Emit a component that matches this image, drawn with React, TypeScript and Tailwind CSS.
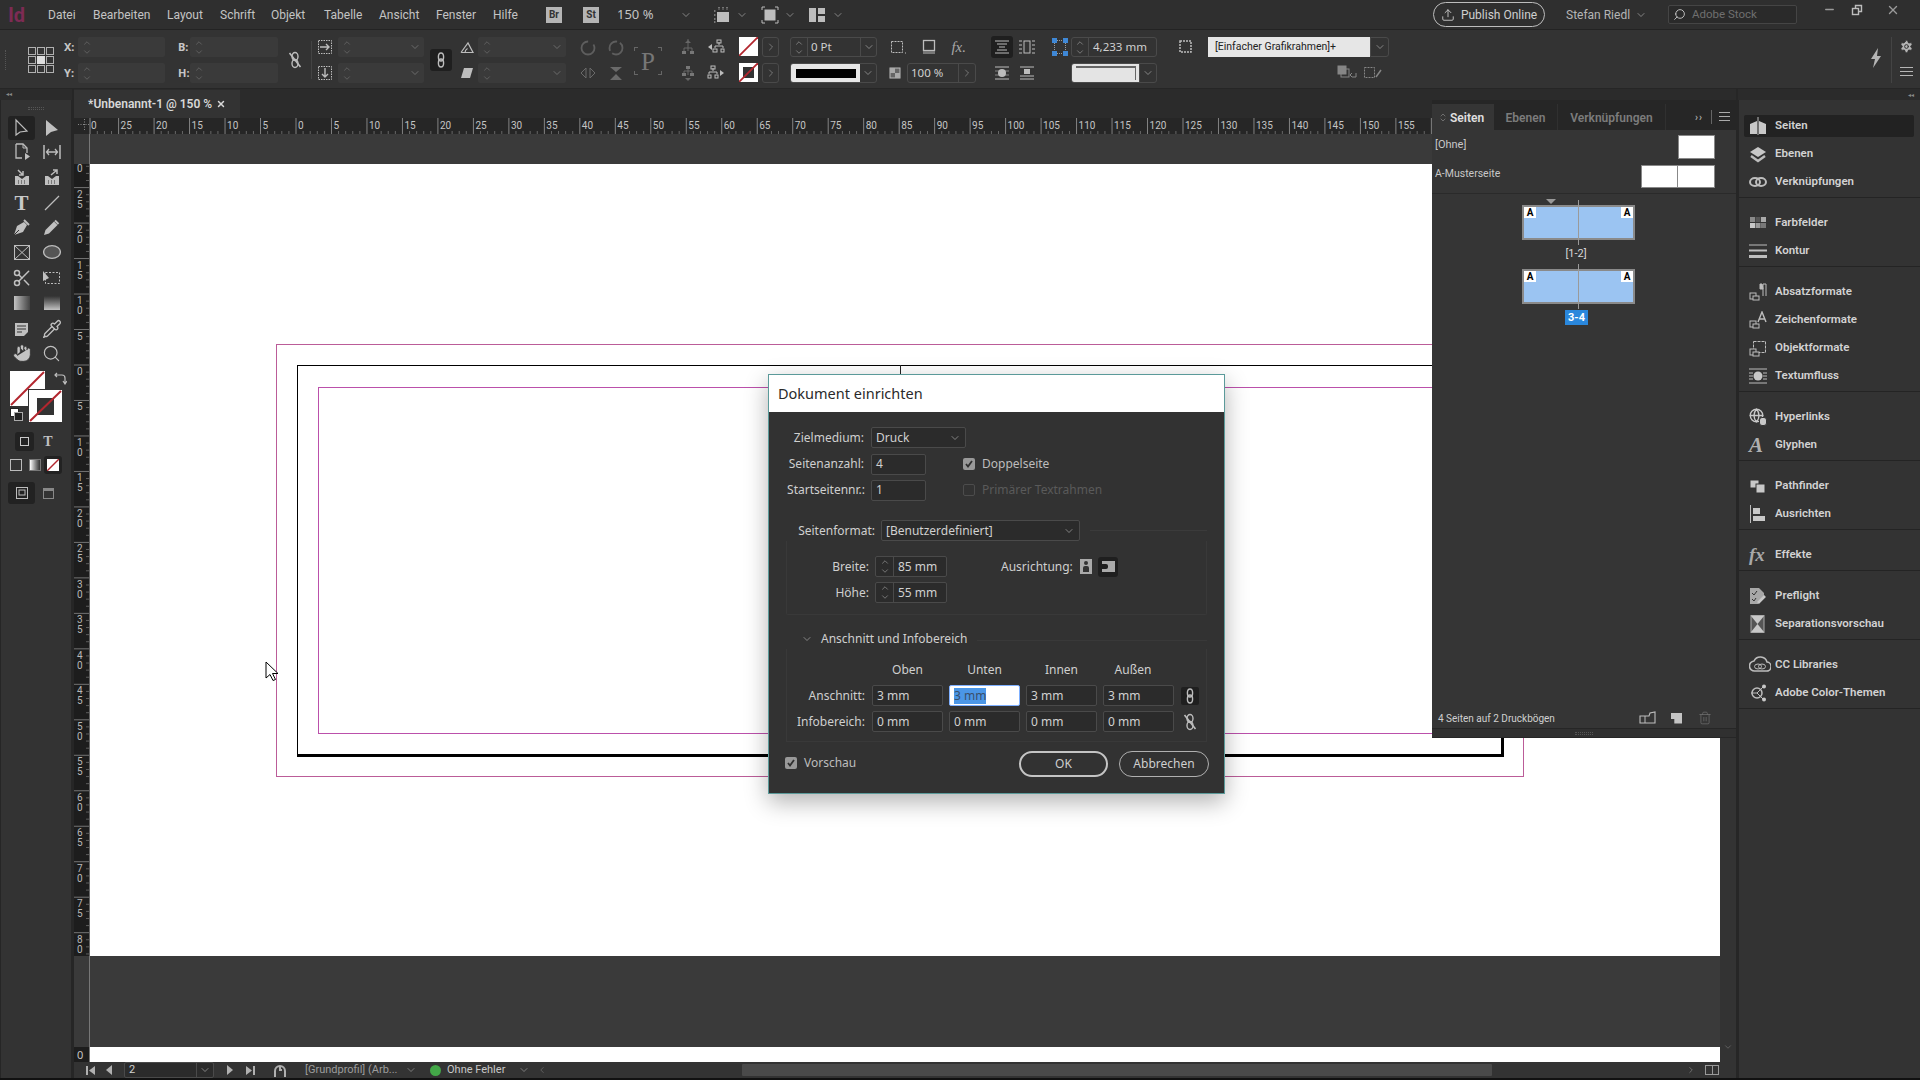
import React from 'react';
import { ChevronDown, ChevronUp, ChevronRight, Hand, Scissors, Search, Settings, Pipette, Globe, X, Minus, Upload, Trash2 } from 'lucide-react';

const ink = '#bdbdbd';

function Ico({ w = 18, h = 18, children }: { w?: number; h?: number; children: React.ReactNode }) {
  return (
    <svg width={w} height={h} viewBox={`0 0 ${w} ${h}`} fill="none" stroke={ink} strokeWidth="1" className="shrink-0 block">
      {children}
    </svg>
  );
}

function Chev({ c = 'text-[#a8a8a8]' }: { c?: string }) {
  return <ChevronDown size={12} strokeWidth={1.4} className={`${c} shrink-0`} />;
}

function Spin({ bright }: { bright?: boolean }) {
  return (
    <div className={`flex flex-col items-center -space-y-[1px] shrink-0 ${bright ? 'text-[#b4b4b4]' : 'text-[#7c7c7c]'}`}>
      <ChevronUp size={10} strokeWidth={1.3} />
      <ChevronDown size={10} strokeWidth={1.3} />
    </div>
  );
}

const chain = (
  <Ico w={10} h={16}>
    <ellipse cx="5" cy="5" rx="2.6" ry="4" strokeWidth="1.4" />
    <ellipse cx="5" cy="11" rx="2.6" ry="4" strokeWidth="1.4" />
  </Ico>
);

const brokenChain = (
  <Ico w={14} h={18}>
    <ellipse cx="7" cy="5.5" rx="3" ry="4" strokeWidth="1.4" />
    <ellipse cx="7" cy="12.5" rx="3" ry="4" strokeWidth="1.4" />
    <path d="M1.5 2 L12.5 16" strokeWidth="1.6" />
  </Ico>
);

const menuItems = [
  { label: 'Datei', cls: 'w-[45px]' },
  { label: 'Bearbeiten', cls: 'w-[74px]' },
  { label: 'Layout', cls: 'w-[53px]' },
  { label: 'Schrift', cls: 'w-[51px]' },
  { label: 'Objekt', cls: 'w-[53px]' },
  { label: 'Tabelle', cls: 'w-[55px]' },
  { label: 'Ansicht', cls: 'w-[57px]' },
  { label: 'Fenster', cls: 'w-[57px]' },
  { label: 'Hilfe', cls: 'w-[53px]' },
];

function MenuBar() {
  return (
    <div className="h-[30px] shrink-0 flex items-center bg-[#2f2f2f] border-b border-[#232323] text-[12px] text-[#c4c4c4] font-['Roboto',sans-serif]">
      <div className="w-[48px] pl-[8px] font-bold text-[20px] leading-none text-[#7d2b54]">Id</div>
      {menuItems.map(m => (
        <div key={m.label} className={m.cls}>{m.label}</div>
      ))}
      <div className="w-[16px] h-[16px] bg-[#b5b5b5] text-[#333] text-[10px] font-bold flex items-center justify-center">Br</div>
      <div className="w-[16px] h-[16px] ml-[21px] bg-[#b5b5b5] text-[#333] text-[10px] font-bold flex items-center justify-center">St</div>
      <div className="ml-[18px] w-[63px] text-[13px] font-['Noto_Sans',sans-serif]">150 %</div>
      <Chev />
      <div className="ml-[21px]">
        <Ico>
          <rect x="4" y="6" width="12" height="10" fill={ink} stroke="none" />
          <path d="M1 5h2M1 9h2M1 13h2M1 16h2M6 1v3M10 1v3M14 1v3" strokeDasharray="1.5 1" />
        </Ico>
      </div>
      <div className="ml-[5px]"><Chev /></div>
      <div className="ml-[13px]">
        <Ico>
          <rect x="3.5" y="3.5" width="11" height="11" fill={ink} stroke="none" />
          <path d="M1 4V1h3M14 1h3v3M17 14v3h-3M4 17H1v-3" />
        </Ico>
      </div>
      <div className="ml-[5px]"><Chev /></div>
      <div className="ml-[12px]">
        <Ico>
          <rect x="1" y="2" width="7" height="14" fill={ink} stroke="none" />
          <rect x="10" y="2" width="7" height="6" fill={ink} stroke="none" />
          <rect x="10" y="10" width="7" height="6" fill={ink} stroke="none" />
        </Ico>
      </div>
      <div className="ml-[6px]"><Chev /></div>
      <div className="ml-auto flex items-center pr-[5px]">
        <div className="w-[112px] h-[25px] border border-[#bdbdbd] rounded-full flex items-center justify-center gap-[6px] text-[12px] text-[#cfcfcf]">
          <Upload size={14} strokeWidth={1.5} />
          Publish Online
        </div>
        <div className="ml-[21px] w-[69px] whitespace-nowrap text-[#b5b5b5]">Stefan Riedl</div>
        <Chev />
        <div className="ml-[21px] w-[129px] h-[19px] border border-[#454545] rounded-[2px] bg-[#2a2a2a] flex items-center pl-[4px] gap-[6px] text-[11.5px] text-[#6f6f6f]">
          <Search size={13} strokeWidth={1.8} className="text-[#c0c0c0] -scale-x-100" />
          Adobe Stock
        </div>
        <div className="ml-[18px] w-[100px] h-[20px] -mt-[10px] flex items-center text-[#9a9a9a]">
          <div className="w-[28px] flex justify-center"><Minus size={13} strokeWidth={2.4} /></div>
          <div className="w-[28px] flex justify-center">
            <Ico w={12} h={12}>
              <rect x="1.5" y="4.5" width="6" height="6" strokeWidth="1.4" />
              <path d="M4.5 4V1.5h6v6H8" strokeWidth="1.4" />
            </Ico>
          </div>
          <div className="w-[44px] flex justify-center"><X size={14} strokeWidth={2.4} /></div>
        </div>
      </div>
    </div>
  );
}

function CtlField({ w, children }: { w: string; children?: React.ReactNode }) {
  return <div className={`${w} h-[20px] bg-[#3a3a3a] rounded-[2px] flex items-center`}>{children}</div>;
}

function EmptySpin({ w, drop }: { w: string; drop?: boolean }) {
  return (
    <CtlField w={w}>
      <div className="pl-[4px]"><Spin /></div>
      {drop && <div className="ml-auto pr-[3px]"><Chev c="text-[#808080]" /></div>}
    </CtlField>
  );
}

function Two({ ml, top, bottom }: { ml: string; top: React.ReactNode; bottom: React.ReactNode }) {
  return (
    <div className={`${ml} flex flex-col gap-[6px] shrink-0`}>
      <div className="h-[20px] flex items-center justify-center">{top}</div>
      <div className="h-[20px] flex items-center justify-center">{bottom}</div>
    </div>
  );
}

function Outlined({ w, children }: { w: string; children: React.ReactNode }) {
  return <div className={`${w} h-[20px] border border-[#4a4a4a] rounded-[3px] flex items-center overflow-hidden text-[11.5px] text-[#d0d0d0]`}>{children}</div>;
}

function Swatch({ inner }: { inner?: boolean }) {
  return (
    <div className="relative w-[19px] h-[19px] bg-white">
      {inner && <div className="absolute left-[4px] top-[4px] w-[11px] h-[11px] bg-[#333]" />}
      <svg width="19" height="19" className="absolute inset-0"><path d="M0 19L19 0" stroke="#b3262e" strokeWidth="1.8" /></svg>
    </div>
  );
}

function ControlBar() {
  const grid = [0, 1, 2, 3, 4, 5, 6, 7, 8];
  return (
    <div className="h-[59px] shrink-0 bg-[#333] border-b border-[#262626] flex pt-[7px] text-[#c6c6c6]">
      <div className="ml-[5px] mt-[13px] w-[3px] h-[20px] border-l border-dotted border-[#555]" />
      <div className="ml-[20px] mt-[10px] w-[26px] h-[26px] grid grid-cols-3 gap-[1px] shrink-0">
        {grid.map(i => (
          <div key={i} className={i === 4 ? 'bg-[#ddd]' : 'border border-[#b0b0b0]'} />
        ))}
      </div>
      <div className="ml-[10px] flex flex-col gap-[6px] shrink-0 text-[11px] font-bold">
        <div className="flex items-center w-[101px]"><span className="w-[14px]">X:</span><EmptySpin w="w-[87px]" /></div>
        <div className="flex items-center w-[101px]"><span className="w-[14px]">Y:</span><EmptySpin w="w-[87px]" /></div>
      </div>
      <div className="ml-[13px] flex flex-col gap-[6px] shrink-0 text-[11px] font-bold">
        <div className="flex items-center w-[100px]"><span className="w-[12px]">B:</span><EmptySpin w="w-[88px]" /></div>
        <div className="flex items-center w-[100px]"><span className="w-[12px]">H:</span><EmptySpin w="w-[88px]" /></div>
      </div>
      <div className="ml-[10px] mt-[14px] shrink-0">{brokenChain}</div>
      <div className="ml-[9px] mt-[4px] w-px h-[38px] bg-[#444] shrink-0" />
      <Two ml="ml-[6px]"
        top={<Ico w={14} h={14}><rect x="0.5" y="0.5" width="13" height="13" strokeDasharray="1.5 1" /><path d="M2 7h9M8 4l3 3-3 3" strokeWidth="1.4" /></Ico>}
        bottom={<Ico w={14} h={14}><rect x="0.5" y="0.5" width="13" height="13" strokeDasharray="1.5 1" /><path d="M7 2v9M4 8l3 3 3-3" strokeWidth="1.4" /></Ico>}
      />
      <div className="ml-[6px] flex flex-col gap-[6px] shrink-0">
        <EmptySpin w="w-[86px]" drop />
        <EmptySpin w="w-[86px]" drop />
      </div>
      <div className="ml-[6px] mt-[12px] w-[22px] h-[22px] bg-[#1f1f1f] rounded-[3px] flex items-center justify-center shrink-0">{chain}</div>
      <Two ml="ml-[8px]"
        top={<Ico w={14} h={14}><path d="M1 12.5h12L8 3 1 12.5M5 12.5c0-2 1-3 2.5-4" strokeWidth="1.2" /></Ico>}
        bottom={<Ico w={14} h={14}><path d="M4 2h9l-3 10H1z" fill={ink} stroke="none" /></Ico>}
      />
      <div className="ml-[4px] flex flex-col gap-[6px] shrink-0">
        <EmptySpin w="w-[88px]" drop />
        <EmptySpin w="w-[88px]" drop />
      </div>
      <Two ml="ml-[13px]"
        top={<Ico><circle cx="9" cy="10" r="6.5" stroke="#5e5e5e" strokeWidth="1.8" strokeDasharray="30 6" /></Ico>}
        bottom={<Ico><path d="M7 4v10L2 9zM11 4v10l5-5z" stroke="#6a6a6a" /></Ico>}
      />
      <Two ml="ml-[10px]"
        top={<Ico><circle cx="9" cy="10" r="6.5" stroke="#5e5e5e" strokeWidth="1.8" strokeDasharray="14 3" /></Ico>}
        bottom={<Ico><path d="M3 3h12L9 8zM3 16h12L9 10z" fill="#6a6a6a" stroke="none" /></Ico>}
      />
      <div className="ml-[12px] mt-[10px] w-[22px] h-[28px] relative flex items-center justify-center text-[25px] leading-none text-[#777] font-['Liberation_Serif',serif] shrink-0">
        P
        <div className="absolute -left-[3px] top-0 w-[4px] h-[4px] border-l border-t border-[#666]" />
        <div className="absolute -right-[3px] top-0 w-[4px] h-[4px] border-r border-t border-[#666]" />
        <div className="absolute -right-[3px] bottom-0 w-[4px] h-[4px] border-r border-b border-[#666]" />
        <div className="absolute -left-[3px] bottom-0 w-[4px] h-[4px] border-l border-b border-[#666]" />
      </div>
      <Two ml="ml-[20px]"
        top={<Ico><path d="M9 1v7M5 13v-3h8v3M9 8v5" stroke="#666" /><path d="M6 5l3-3 3 3z" fill="#666" stroke="none" /><rect x="3" y="13" width="4" height="3" fill="#777" stroke="none" /><rect x="11" y="13" width="4" height="3" fill="#777" stroke="none" /></Ico>}
        bottom={<Ico><path d="M9 4v7M5 9V7h8v2" stroke="#666" /><rect x="7" y="2" width="4" height="3" fill="#777" stroke="none" /><rect x="3" y="9" width="4" height="3" fill="#777" stroke="none" /><rect x="11" y="9" width="4" height="3" fill="#777" stroke="none" /><path d="M6 14l3 3 3-3z" fill="#666" stroke="none" /></Ico>}
      />
      <Two ml="ml-[10px]"
        top={<Ico><path d="M5 6l-4 3 4 3z" fill={ink} stroke="none" /><path d="M12 4v3M8 10V8h8v2" /><rect x="10" y="2" width="4" height="3" stroke={ink} /><rect x="6" y="11" width="4" height="3" /><rect x="14" y="11" width="3" height="3" /></Ico>}
        bottom={<Ico><path d="M13 6l4 3-4 3z" fill={ink} stroke="none" /><path d="M6 4v3M2 10V8h8v2" /><rect x="4" y="2" width="4" height="3" /><rect x="1" y="11" width="3" height="3" /><rect x="8" y="11" width="3" height="3" /></Ico>}
      />
      <div className="ml-[14px] flex flex-col gap-[7px] shrink-0">
        <Swatch />
        <Swatch inner />
      </div>
      <div className="ml-[4px] flex flex-col gap-[6px] shrink-0">
        <div className="w-[17px] h-[20px] border border-[#4a4a4a] rounded-[3px] flex items-center justify-center text-[#999]"><ChevronRight size={12} strokeWidth={1.3} /></div>
        <div className="w-[17px] h-[20px] border border-[#4a4a4a] rounded-[3px] flex items-center justify-center text-[#999]"><ChevronRight size={12} strokeWidth={1.3} /></div>
      </div>
      <div className="ml-[11px] flex flex-col gap-[6px] shrink-0">
        <Outlined w="w-[87px]">
          <div className="w-[17px] h-full border-r border-[#4a4a4a] flex items-center justify-center"><Spin bright /></div>
          <div className="pl-[3px] w-[52px]">0 Pt</div>
          <div className="flex-1 h-full border-l border-[#4a4a4a] flex items-center justify-center"><Chev /></div>
        </Outlined>
        <Outlined w="w-[87px]">
          <div className="w-[69px] h-full bg-[#e6e6e6] flex items-center justify-center"><div className="w-[60px] h-[9px] bg-black" /></div>
          <div className="flex-1 flex items-center justify-center"><Chev /></div>
        </Outlined>
      </div>
      <div className="ml-[12px] flex flex-col gap-[6px] shrink-0 w-[89px]">
        <div className="h-[20px] flex items-center justify-between pr-[12px]">
          <Ico><rect x="2.5" y="3.5" width="11" height="11" strokeDasharray="2 1" /><path d="M16 15h1" /></Ico>
          <Ico><rect x="3.5" y="2.5" width="11" height="10" strokeWidth="1.3" /><rect x="3" y="13" width="12" height="3" fill="#777" stroke="none" /></Ico>
          <span className="font-['Liberation_Serif',serif] italic text-[15px] leading-none text-[#a8a8a8]">fx.</span>
        </div>
        <div className="h-[20px] flex items-center">
          <Ico w={12} h={14}><rect x="1" y="2" width="10" height="10" fill="#666" stroke={ink} /><rect x="1" y="2" width="5" height="5" fill="#aaa" stroke="none" /><rect x="6" y="7" width="5" height="5" fill="#aaa" stroke="none" /></Ico>
          <div className="ml-[6px]">
            <Outlined w="w-[69px]">
              <div className="pl-[3px] w-[50px]">100 %</div>
              <div className="flex-1 h-full border-l border-[#4a4a4a] flex items-center justify-center text-[#999]"><ChevronRight size={12} strokeWidth={1.3} /></div>
            </Outlined>
          </div>
        </div>
      </div>
      <Two ml="ml-[13px]"
        top={<div className="w-[22px] h-[22px] bg-[#1f1f1f] rounded-[3px] flex items-center justify-center"><Ico w={14} h={14}><path d="M0 1h14M0 13h14M2 4h10M2 10h10M4 7h6" /></Ico></div>}
        bottom={<Ico w={14} h={14}><path d="M0 1h14M0 13h14" /><circle cx="7" cy="7" r="4" fill={ink} stroke="none" /><path d="M0 5h14M0 9h14" strokeWidth="0.6" /></Ico>}
      />
      <Two ml="ml-[5px]"
        top={<Ico><rect x="6" y="3" width="6" height="12" /><path d="M1 3h3M1 7h3M1 11h3M1 15h3M14 3h3M14 7h3M14 11h3M14 15h3" /></Ico>}
        bottom={<Ico w={14} h={14}><path d="M0 1h14M0 13h14M0 10h14" /><rect x="4" y="3" width="6" height="5" fill={ink} stroke="none" /></Ico>}
      />
      <div className="ml-[16px] mt-[1px] shrink-0">
        <svg width="16" height="18" viewBox="0 0 16 18" fill="#3f88d6">
          <rect x="0" y="0" width="5" height="5" />
          <rect x="11" y="0" width="5" height="5" />
          <rect x="0" y="13" width="5" height="5" />
          <rect x="11" y="13" width="5" height="5" />
          <path d="M2.5 5v8M13.5 5v8M5 2.5h6M5 15.5h6" stroke="#9a9a9a" strokeDasharray="1 1" />
        </svg>
      </div>
      <div className="ml-[3px] flex flex-col gap-[6px] shrink-0">
        <Outlined w="w-[86px]">
          <div className="w-[17px] h-full border-r border-[#4a4a4a] flex items-center justify-center"><Spin bright /></div>
          <div className="pl-[4px]">4,233 mm</div>
        </Outlined>
        <Outlined w="w-[86px]">
          <div className="w-[67px] h-full bg-[#e4e4e4] flex items-center justify-center">
            <div className="w-[60px] h-[14px] border-t-2 border-r border-[#666]" />
          </div>
          <div className="flex-1 h-full border-l border-[#4a4a4a] flex items-center justify-center"><Chev /></div>
        </Outlined>
      </div>
      <div className="ml-[20px] mt-[1px] shrink-0">
        <Ico><rect x="3" y="3" width="11" height="11" strokeDasharray="2 1" strokeWidth="1.5" /></Ico>
      </div>
      <div className="ml-[13px] flex flex-col gap-[6px] shrink-0 w-[181px]">
        <div className="h-[20px] flex">
          <div className="w-[162px] bg-[#e6e6e6] text-[#222] text-[10.5px] font-['Roboto',sans-serif] flex items-center pl-[7px]">[Einfacher Grafikrahmen]+</div>
          <div className="flex-1 border border-[#4a4a4a] rounded-r-[3px] flex items-center justify-center"><Chev /></div>
        </div>
        <div className="h-[20px] flex items-center justify-end gap-[4px] pr-[6px] opacity-60">
          <Ico w={22} h={16}><rect x="1" y="1" width="8" height="8" fill={ink} /><rect x="4" y="4" width="8" height="8" /><path d="M15 12h4V8M15 8l-2 2 2 2" /></Ico>
          <Ico w={20} h={16}><rect x="1.5" y="2.5" width="10" height="10" strokeDasharray="2 1" /><path d="M13 12l5-7" strokeWidth="1.5" /></Ico>
        </div>
      </div>
      <div className="ml-auto flex shrink-0">
        <div className="mt-[11px] mr-[8px] text-[#b5b5b5]">
          <svg width="14" height="20" viewBox="0 0 14 20" fill="currentColor"><path d="M9 0L2 11h4l-2 9 8-12H8z" /></svg>
        </div>
        <div className="w-[29px] border-l border-[#444] h-[46px] flex flex-col items-center gap-[13px] pt-[2px] text-[#b5b5b5]">
          <Settings size={15} fill="currentColor" stroke="#333" strokeWidth={1.6} />
          <div className="w-[13px] h-[9px] border-y border-[#b5b5b5] flex items-center"><div className="w-full h-px bg-[#b5b5b5]" /></div>
        </div>
      </div>
    </div>
  );
}

const T_ICON_FILL = '#c0c0c0';

const toolRows: { gap: string; a: React.ReactNode; b: React.ReactNode; sel?: boolean }[] = [
  {
    gap: '',
    sel: true,
    a: <Ico w={16} h={20}><path d="M2 2v15l4-3 7-1z" strokeWidth="1.2" /></Ico>,
    b: <Ico w={16} h={20}><path d="M2 2v16l5-4 7-2z" fill={T_ICON_FILL} stroke="none" /></Ico>,
  },
  {
    gap: '',
    a: <Ico w={16} h={18}><path d="M2 1h7l4 4v5M2 1v14h6" strokeWidth="1.3" /><path d="M9 1v4h4" /><path d="M11 10v7l5-3.5z" fill={T_ICON_FILL} stroke="none" /></Ico>,
    b: <Ico w={18} h={16}><path d="M1 1v14M17 1v14" strokeWidth="1.5" /><path d="M4 8h10M6 5L3.5 8 6 11M12 5l2.5 3L12 11" strokeWidth="1.3" /></Ico>,
  },
  {
    gap: 'mt-[1px]',
    a: <Ico w={16} h={17}><path d="M1 7v9h14V7h-3l-4 3-4-3z" fill={T_ICON_FILL} stroke="none" /><path d="M4 1l5 5M9 2v4H5" strokeWidth="1.5" /><path d="M4 12h1M7 12h1M10 12h1M4 14h1M7 14h1M10 14h1" stroke="#333" /></Ico>,
    b: <Ico w={16} h={17}><path d="M1 7v9h14V7h-3l-4 3-4-3z" fill={T_ICON_FILL} stroke="none" /><path d="M7 6l6-5M9 1h4v4" strokeWidth="1.5" /><path d="M4 12h1M7 12h1M10 12h1M4 14h1M7 14h1M10 14h1" stroke="#333" /></Ico>,
  },
  {
    gap: 'mt-[2px]',
    a: <span className="font-['Liberation_Serif',serif] font-bold text-[21px] leading-none text-[#c8c8c8]">T</span>,
    b: <Ico w={16} h={16}><path d="M1 15L15 1" strokeWidth="1.3" /></Ico>,
  },
  {
    gap: '',
    a: <Ico w={17} h={17}><path d="M1 16l3-9 7-4 3 3-4 7z" fill={T_ICON_FILL} stroke="none" /><path d="M11 1l5 5" strokeWidth="2" /><path d="M1 16l5-5" stroke="#333" /></Ico>,
    b: <Ico w={17} h={17}><path d="M1 16l1.5-5L11 2.5l3.5 3.5L6 14.5z" fill={T_ICON_FILL} stroke="none" /><path d="M12 1.5l3.5 3.5" strokeWidth="2" /></Ico>,
  },
  {
    gap: 'mt-[1px]',
    a: <Ico w={16} h={15}><rect x="0.5" y="0.5" width="15" height="14" strokeWidth="1.1" /><path d="M1 1l14 13M15 1L1 14" /></Ico>,
    b: <Ico w={18} h={14}><ellipse cx="9" cy="7" rx="8.4" ry="6.3" fill="#555" strokeWidth="1.3" /></Ico>,
  },
  {
    gap: 'mt-[2px]',
    a: <div className="text-[#c0c0c0]"><Scissors size={20} strokeWidth={1.8} /></div>,
    b: <Ico w={20} h={16}><rect x="3.5" y="2.5" width="14" height="11" strokeDasharray="2 1.5" /><path d="M1 1v10l6-3z" fill={T_ICON_FILL} stroke="none" /></Ico>,
  },
  {
    gap: 'mt-[1px]',
    a: <div className="w-[16px] h-[14px] bg-gradient-to-r from-[#c4c4c4] to-[#444]" />,
    b: <div className="w-[16px] h-[14px] bg-gradient-to-b from-[#333] to-[#c4c4c4]" />,
  },
  {
    gap: 'mt-[2px]',
    a: <Ico w={15} h={15}><path d="M1 1h13v9l-4 4H1z" fill={T_ICON_FILL} stroke="none" /><path d="M3 4h9M3 7h9M3 10h5" stroke="#333" /></Ico>,
    b: <div className="text-[#c0c0c0] flex"><Pipette size={20} strokeWidth={1.6} /></div>,
  },
  {
    gap: '',
    a: <div className="text-[#c4c4c4]"><Hand size={20} fill="currentColor" stroke="#333" strokeWidth={1} /></div>,
    b: <div className="text-[#c0c0c0]"><Search size={19} strokeWidth={1.5} /></div>,
  },
];

function Toolbar() {
  return (
    <div className="w-[72px] shrink-0 flex flex-col bg-[#2b2b2b]">
      <div className="h-[11px] shrink-0 pl-[6px] text-[6px] leading-[11px] text-[#8a8a8a]">◂◂</div>
      <div className="flex-1 bg-[#333] border-l border-r border-[#262626] flex flex-col">
        <div className="h-[16px] shrink-0 flex justify-center items-center">
          <div className="w-[16px] h-[3px] border-y border-dotted border-[#555]" />
        </div>
        {toolRows.map((r, i) => (
          <div key={i} className={`h-[24px] ${r.gap} shrink-0 flex items-center`}>
            <div className={`w-[27px] h-full ml-[7px] flex items-center justify-center ${r.sel ? 'bg-[#222] rounded-[3px]' : ''}`}>{r.a}</div>
            <div className="w-[27px] h-full ml-[3px] flex items-center justify-center">{r.b}</div>
          </div>
        ))}
        <div className="relative h-[58px] mt-[6px] shrink-0">
          <div className="absolute left-[9px] top-0 w-[35px] h-[35px] bg-white">
            <svg width="35" height="35" className="absolute inset-0"><path d="M1 34L34 1" stroke="#b3262e" strokeWidth="2" /></svg>
          </div>
          <div className="absolute left-[27px] top-[18px] w-[35px] h-[34px] bg-white border border-[#333]">
            <div className="absolute left-[8px] top-[8px] w-[17px] h-[17px] bg-[#333]" />
            <svg width="33" height="32" className="absolute inset-0"><path d="M1 31L32 1" stroke="#b3262e" strokeWidth="2" /></svg>
          </div>
          <div className="absolute left-[53px] top-[1px]">
            <Ico w={13} h={13}><path d="M1 3h7c2 0 3 1 3 3v5M9 9l2 3 2-3M3 1L1 3l2 2" strokeWidth="1.2" /></Ico>
          </div>
          <div className="absolute left-[9px] top-[37px] w-[9px] h-[9px] bg-white border border-[#222]" />
          <div className="absolute left-[13px] top-[41px] w-[9px] h-[9px] bg-[#222] border border-[#aaa]" />
        </div>
        <div className="h-[24px] flex items-center shrink-0">
          <div className="ml-[14px] w-[19px] h-[19px] bg-[#222] rounded-[3px] flex items-center justify-center">
            <div className="w-[9px] h-[9px] border border-[#c8c8c8]" />
          </div>
          <span className="ml-[6px] w-[16px] text-center font-['Liberation_Serif',serif] font-bold text-[14px] text-[#c0c0c0]">T</span>
        </div>
        <div className="h-[24px] flex items-center shrink-0">
          <div className="ml-[9px] w-[12px] h-[12px] border border-[#bbb]" />
          <div className="ml-[7px] w-[12px] h-[12px] bg-gradient-to-r from-white to-[#333] border border-[#777]" />
          <div className="ml-[3px] w-[18px] h-[18px] bg-[#222] rounded-[3px] flex items-center justify-center">
            <div className="relative w-[12px] h-[12px] bg-white">
              <svg width="12" height="12" className="absolute inset-0"><path d="M0 12L12 0" stroke="#b3262e" strokeWidth="1.4" /></svg>
            </div>
          </div>
        </div>
        <div className="h-[24px] mt-[4px] flex items-center shrink-0">
          <div className="ml-[7px] w-[27px] h-[22px] bg-[#222] rounded-[3px] flex items-center justify-center">
            <Ico w={12} h={12}><rect x="0.5" y="0.5" width="11" height="11" /><rect x="3" y="3" width="6" height="5" /></Ico>
          </div>
          <div className="ml-[8px] w-[11px] h-[11px] border border-[#888] border-t-[3px]" />
        </div>
      </div>
    </div>
  );
}

const PITCH = 35.48;
// the 30 mark sits under the ruler corner, only its 0 shows (drawn separately)
const hLabels = Array.from({ length: 37 }, (_, i) => i - 5);

function HRuler() {
  const x0 = 296 - 74;
  const minors = Array.from({ length: 240 }, (_, i) => i);
  return (
    <svg width="1646" height="16" className="block bg-[#262626]">
      {minors.map(i => {
        const x = x0 + ((i - 40) * PITCH) / 5;
        if (x < 17) return null;
        return <path key={i} d={`M${x} ${i % 5 === 0 ? 0 : 13}V16`} stroke={i % 5 === 0 ? '#9a9a9a' : '#777'} strokeWidth="0.8" />;
      })}
      {hLabels.map(k => (
        <text key={k} x={x0 + k * PITCH + 2} y="11" className="fill-[#c4c4c4] text-[10px]" fontFamily="Roboto, sans-serif">{Math.abs(k) * 5}</text>
      ))}
      <text x="17" y="11" className="fill-[#c4c4c4] text-[10px]" fontFamily="Roboto, sans-serif">0</text>
      <path d="M16 0V16" stroke="#888" />
      <path d="M4 6.5H16M10.5 1V12" stroke="#888" strokeDasharray="1 1.5" />
    </svg>
  );
}

function VRuler() {
  const y0 = 365 - 164;
  const ticks = Array.from({ length: 115 }, (_, i) => i);
  const labels = Array.from({ length: 23 }, (_, i) => i - 6);
  return (
    <svg width="16" height="792" className="block bg-[#1d1d1d] shrink-0">
      {ticks.map(i => {
        const y = y0 + ((i - 30) * PITCH) / 5;
        if (y < 0) return null;
        const major = i % 5 === 0;
        return <path key={i} d={`M${major ? 0 : 12} ${y}H16`} stroke={major ? '#8a8a8a' : '#6e6e6e'} strokeWidth="0.8" />;
      })}
      {labels.map(k => {
        const s = String(Math.abs(k) * 5);
        const y = y0 + k * PITCH;
        return (
          <React.Fragment key={k}>
            {s.split('').map((d, j) =>
              k === -6 && j === 0 ? null : (
                <text key={j} x="3" y={y + 10 + j * 10} className="fill-[#b8b8b8] text-[10px]" fontFamily="Roboto, sans-serif">{d}</text>
              )
            )}
          </React.Fragment>
        );
      })}
      <path d="M15.5 0V792" stroke="#666" />
    </svg>
  );
}

function Canvas() {
  return (
    <div className="relative flex flex-col flex-1 min-h-0">
      <div className="h-[30px] shrink-0 bg-[#3a3a3a] flex">
        <div className="w-[16px] border-r border-[#777]" />
      </div>
      <div className="h-[792px] shrink-0 flex">
        <VRuler />
        <div className="flex-1 bg-white" />
      </div>
      <div className="h-[91px] shrink-0 bg-[#3a3a3a] flex">
        <div className="w-[16px] border-r border-[#777]" />
      </div>
      <div className="h-[15px] shrink-0 flex">
        <div className="w-[16px] bg-[#1d1d1d] text-[11px] leading-[15px] pl-[3px] text-[#c4c4c4] border-r border-[#777]">0</div>
        <div className="flex-1 bg-white" />
      </div>
      {/* bleed, page and margin guides on the document canvas */}
      <div className="absolute left-[202px] top-[210px] w-[1248px] h-[433px] border border-[#bb5c98]" />
      <div className="absolute left-[223px] top-[231px] w-[1207px] h-[392px] border-l border-t border-r-[3px] border-b-[3px] border-black" />
      <div className="absolute left-[826px] top-[231px] w-px h-[390px] bg-[#222]" />
      <div className="absolute left-[244px] top-[253px] w-[1171px] h-[347px] border border-[#bb50ab]" />
      <div className="absolute left-[191px] top-[527px]">
        <svg width="14" height="21" viewBox="0 0 14 21">
          <path d="M1 1v16l4-3.5 3 6 2.5-1-3-6H13z" fill="white" stroke="black" strokeWidth="1" />
        </svg>
      </div>
    </div>
  );
}

function StatusBar() {
  return (
    <div className="h-[16px] shrink-0 bg-[#333] flex items-center text-[11px] text-[#bcbcbc] relative font-['Roboto',sans-serif]">
      <div className="ml-[12px] w-[9px] h-[11px] flex text-[#b0b0b0]">
        <svg width="9" height="11" viewBox="0 0 9 11" fill="currentColor"><path d="M0 1h2v9H0zM9 1v9L3 5.5z" /></svg>
      </div>
      <svg width="6" height="10" viewBox="0 0 6 10" fill="#b0b0b0" className="ml-[11px]"><path d="M6 0v10L0 5z" /></svg>
      <div className="ml-[12px] w-[90px] h-[16px] flex items-center border border-[#4a4a4a] rounded-[2px] bg-[#2b2b2b] text-[#d0d0d0] shrink-0">
        <span className="pl-[4px] flex-1">2</span>
        <div className="w-[17px] border-l h-full border-[#4a4a4a] flex items-center justify-center"><Chev /></div>
      </div>
      <svg width="6" height="10" viewBox="0 0 6 10" fill="#b0b0b0" className="ml-[13px]"><path d="M0 0v10L6 5z" /></svg>
      <svg width="9" height="11" viewBox="0 0 9 11" fill="#b0b0b0" className="ml-[13px]"><path d="M7 1h2v9H7zM0 1v9L6 5.5z" /></svg>
      <svg width="16" height="13" viewBox="0 0 16 13" fill="none" stroke="#b0b0b0" strokeWidth="2" className="ml-[18px]"><path d="M2 13V7a5 5 0 0 1 10 0v6M7 3v3h2" /></svg>
      <span className="ml-[16px] w-[91px] whitespace-nowrap text-[#9c9c9c]">[Grundprofil] (Arb...</span>
      <div className="ml-[9px]"><Chev c="text-[#999]" /></div>
      <div className="ml-[13px] w-[11px] h-[11px] rounded-full bg-[#43a748] shrink-0" />
      <span className="ml-[6px] w-[71px] text-[#c8c8c8] whitespace-nowrap">Ohne Fehler</span>
      <Chev c="text-[#999]" />
      <ChevronDown size={10} className="ml-[7px] rotate-90 text-[#666]" />
      <div className="ml-[195px] w-[750px] h-[12px] bg-[#4a4a4a] rounded-[1px]" />
      <ChevronRight size={10} className="ml-[194px] text-[#777]" />
      <div className="ml-[9px] w-[14px] h-[10px] border border-[#999] flex justify-center"><div className="w-px h-full bg-[#999]" /></div>
    </div>
  );
}

function DockIcon({ name }: { name: string }) {
  switch (name) {
    case 'Seiten':
      return <Ico><path d="M8 4v13H1V7zM10 4v13h7V7z" fill="#c8c8c8" stroke="none" /><path d="M9 0v18" /></Ico>;
    case 'Ebenen':
      return <Ico><path d="M9 2l8 5-8 5-8-5z" fill="#c8c8c8" stroke="none" /><path d="M2 11l7 5 7-5" strokeWidth="2.4" /></Ico>;
    case 'Verknüpfungen':
      return <Ico><ellipse cx="6" cy="9" rx="5" ry="4" strokeWidth="2" /><ellipse cx="12" cy="9" rx="5" ry="4" strokeWidth="2" /></Ico>;
    case 'Farbfelder':
      return <Ico><rect x="1" y="3" width="5" height="5" fill="#8a8a8a" stroke="none" /><rect x="6.5" y="3" width="5" height="5" fill="#555" stroke="none" /><rect x="12" y="3" width="5" height="5" fill="#aaa" stroke="none" /><rect x="1" y="9" width="5" height="5" fill="#c8c8c8" stroke="none" /><rect x="6.5" y="9" width="5" height="5" fill="#999" stroke="none" /><rect x="12" y="9" width="5" height="5" fill="#777" stroke="none" /></Ico>;
    case 'Kontur':
      return <Ico><path d="M0 3h18" /><path d="M0 8.5h18" strokeWidth="2" /><path d="M0 14.5h18" strokeWidth="3" /></Ico>;
    case 'Absatzformate':
      return <Ico><rect x="1" y="10" width="6" height="6" /><rect x="4" y="13" width="6" height="4" fill="#333" /><path d="M14 1h3v12M14 1v12" /><path d="M13 1h-2v5h3z" fill={ink} /></Ico>;
    case 'Zeichenformate':
      return <Ico><rect x="1" y="10" width="6" height="6" /><rect x="4" y="13" width="6" height="4" fill="#333" /><path d="M9 11l4-10 4 10M10.5 8h5" strokeWidth="1.4" /></Ico>;
    case 'Objektformate':
      return <Ico><rect x="4.5" y="2.5" width="12" height="11" strokeDasharray="3 1" /><rect x="1" y="10" width="6" height="6" fill="#333" /><rect x="4" y="13" width="6" height="4" fill="#333" /></Ico>;
    case 'Textumfluss':
      return <Ico><path d="M0 2h18M0 16h18M0 6h4M14 6h4M0 9h4M14 9h4M0 12h4M14 12h4" /><circle cx="9" cy="9" r="4.5" fill="#c8c8c8" stroke="none" /></Ico>;
    case 'Hyperlinks':
      return <div className="text-[#c8c8c8] relative w-[18px] h-[18px]"><Globe size={15} strokeWidth={2.2} /><div className="absolute right-0 bottom-0 w-[8px] h-[9px] bg-[#c8c8c8] rounded-[3px] border border-[#333]" /></div>;
    case 'Glyphen':
      return <span className="font-['Liberation_Serif',serif] italic text-[21px] leading-[18px] text-[#b0b0b0] block w-[18px]">A</span>;
    case 'Pathfinder':
      return <Ico><rect x="1" y="3" width="9" height="8" fill="#c8c8c8" stroke="#333" /><rect x="7" y="7" width="9" height="9" fill="#c8c8c8" stroke="#333" /></Ico>;
    case 'Ausrichten':
      return <Ico><path d="M1.5 0v18" /><rect x="4" y="3" width="7" height="6" fill="#c8c8c8" stroke="none" /><rect x="4" y="11" width="12" height="5" fill="#c8c8c8" stroke="none" /></Ico>;
    case 'Effekte':
      return <span className="font-['Liberation_Serif',serif] italic text-[19px] leading-[18px] text-[#a8a8a8] block w-[18px]">fx</span>;
    case 'Preflight':
      return <Ico><path d="M1 1h9l5 5v4l-6 7H1z" fill="#a8a8a8" stroke="none" /><path d="M3 6l2 2 3-4M3 12l2 2 2-3" stroke="#333" /><path d="M9 16l7-7" stroke="#c8c8c8" strokeWidth="2.6" /></Ico>;
    case 'Separationsvorschau':
      return <Ico><rect x="2" y="0.5" width="13" height="17" fill="#555" stroke="#aaa" /><path d="M2 1h13L8.5 9zM2 17h13L8.5 9z" fill="#c8c8c8" stroke="none" /></Ico>;
    case 'CC Libraries':
      return <Ico w={22} h={18}><path d="M6 15a5 5 0 0 1-1-10 7 7 0 0 1 13 1 4.5 4.5 0 0 1-1 9z" strokeWidth="1.6" /><ellipse cx="9" cy="10.5" rx="3.5" ry="2.5" /><ellipse cx="13" cy="10.5" rx="3.5" ry="2.5" /></Ico>;
    default:
      return <Ico><circle cx="8" cy="9" r="5" strokeWidth="1.5" /><path d="M8 9l7-7M8 9l7 7M8 9H2" /><circle cx="15" cy="2.5" r="2" fill="#c8c8c8" stroke="none" /><circle cx="15" cy="15.5" r="2" fill="#c8c8c8" stroke="none" /></Ico>;
  }
}

const dockGroups = [
  ['Seiten', 'Ebenen', 'Verknüpfungen'],
  ['Farbfelder', 'Kontur'],
  ['Absatzformate', 'Zeichenformate', 'Objektformate', 'Textumfluss'],
  ['Hyperlinks', 'Glyphen'],
  ['Pathfinder', 'Ausrichten'],
  ['Effekte'],
  ['Preflight', 'Separationsvorschau'],
  ['CC Libraries', 'Adobe Color-Themen'],
];

function Dock() {
  return (
    <div className="w-[182px] shrink-0 flex flex-col bg-[#2b2b2b] font-['Roboto',sans-serif]">
      <div className="h-[11px] shrink-0 text-right pr-[6px] text-[6px] leading-[11px] text-[#8a8a8a]">◂◂</div>
      <div className="flex-1 bg-[#333] border-l border-[#262626]">
        {dockGroups.map((g, gi) => (
          <div key={gi} className={`border-b border-[#242424] pb-[1px] ${gi === 0 ? 'pt-[12px]' : 'pt-[11px]'}`}>
            {g.map(name => (
              <div key={name} className={`h-[28px] flex items-center pl-[10px] text-[11.5px] font-semibold text-[#d2d2d2] ${name === 'Seiten' ? 'relative' : ''}`}>
                {name === 'Seiten' && <div className="absolute left-[5px] right-[6px] top-[3px] bottom-[3px] bg-[#222] rounded-[2px]" />}
                <div className="relative w-[26px] shrink-0"><DockIcon name={name} /></div>
                <span className="relative whitespace-nowrap">{name}</span>
              </div>
            ))}
          </div>
        ))}
      </div>
    </div>
  );
}

function Spread({ top }: { top: string }) {
  return (
    <div className={`relative ${top} ml-[90px] w-[113px] h-[35px] bg-[#9bc4f2] border-2 border-[#8a8a8a] border-t-[2px]`}>
      <div className="absolute left-0 top-0 w-[12px] h-[11px] bg-white text-black text-[10px] font-bold leading-[11px] text-center">A</div>
      <div className="absolute right-0 top-0 w-[12px] h-[11px] bg-white text-black text-[10px] font-bold leading-[11px] text-center">A</div>
      <div className="absolute left-[54px] -top-[7px] -bottom-[7px] w-px bg-[#9a9a9a]" />
    </div>
  );
}

function PagesPanel() {
  return (
    <div className="absolute left-[1432px] top-[100px] w-[305px] h-[638px] bg-[#353535] border-r border-b border-[#262626] flex flex-col text-[#c8c8c8] font-['Roboto',sans-serif]">
      <div className="h-[30px] shrink-0 bg-[#262626] pt-[4px] flex text-[12px] font-semibold">
        <div className="w-[62px] h-[26px] pt-[1px] bg-[#353535] flex items-center pl-[7px] gap-[3px] text-[#e0e0e0]">
          <div className="flex flex-col -space-y-[3px] text-[#a0a0a0]">
            <ChevronUp size={8} strokeWidth={1.6} /><ChevronDown size={8} strokeWidth={1.6} />
          </div>
          Seiten
        </div>
        <div className="w-[64px] h-[26px] pt-[1px] flex items-center justify-center text-[#7c7c7c] border-r border-[#303030]">Ebenen</div>
        <div className="w-[108px] h-[26px] pt-[1px] flex items-center justify-center text-[#7c7c7c] border-r border-[#303030]">Verknüpfungen</div>
        <span className="ml-[29px] h-[26px] flex items-center text-[#b0b0b0] text-[10px] tracking-[1px]">››</span>
        <div className="ml-[8px] mt-[6px] w-px h-[14px] bg-[#666]" />
        <div className="ml-[7px] mt-[8px] w-[11px] h-[9px] border-y border-[#aaa] flex items-center"><div className="w-full h-px bg-[#aaa]" /></div>
      </div>
      <div className="h-[35px] shrink-0 flex items-start pl-[3px] text-[11px] pr-[21px] justify-between pt-[5px]">
        <span className="leading-[16px] mt-[2px]">[Ohne]</span>
        <div className="w-[37px] h-[24px] bg-white border border-[#888]" />
      </div>
      <div className="h-[29px] shrink-0 flex items-start pl-[3px] pr-[21px] justify-between text-[10.5px] border-b border-[#2a2a2a]">
        <span className="leading-[16px] mt-[1px]">A-Musterseite</span>
        <div className="flex">
          <div className="w-[37px] h-[23px] bg-white border border-[#888]" />
          <div className="w-[37px] h-[23px] bg-white border border-[#888] border-l-0" />
        </div>
      </div>
      <div className="relative flex-1 flex flex-col">
        <div className="absolute left-[114px] top-[5px] w-0 h-0 border-x-[5px] border-x-transparent border-t-[5px] border-t-[#999]" />
        <Spread top="mt-[11px]" />
        <div className="ml-[128px] mt-[6px] w-[32px] h-[16px] bg-[#353535] relative text-center text-[11px] leading-[16px] text-[#d8d8d8] whitespace-nowrap">[1-2]</div>
        <Spread top="mt-[7px]" />
        <div className="ml-[133px] mt-[6px] w-[23px] h-[15px] bg-[#2a87dc] relative text-center text-[11px] font-bold leading-[15px] text-white">3-4</div>
        <div className="mt-auto h-[22px] pt-[2px] flex items-center pl-[6px] text-[10px] text-[#d0d0d0]">
          <span>4 Seiten auf 2 Druckbögen</span>
          <div className="ml-auto flex items-center pr-[24px]">
            <Ico w={20} h={14}><path d="M1 5h9l1-3 5-1v11H1z" strokeWidth="1.1" /><path d="M6 5v7" /></Ico>
            <div className="ml-[12px] w-[11px] h-[11px] bg-[#c4c4c4] [clip-path:polygon(0_0,100%_0,100%_100%,30%_100%,30%_60%,0_60%)]" />
            <Trash2 size={14} strokeWidth={1.1} className="ml-[16px] text-[#777]" />
          </div>
        </div>
        <div className="h-[9px] border-t border-[#262626] bg-[#303030] flex justify-center items-center">
          <div className="w-[18px] h-[3px] border-y border-dotted border-[#555]" />
        </div>
      </div>
    </div>
  );
}

function Box({ w, h = 'h-[21px]', children, cls = '' }: { w: string; h?: string; children?: React.ReactNode; cls?: string }) {
  return <div className={`${w} ${h} shrink-0 bg-[#2b2b2b] border border-[#4a4a4a] rounded-[2px] flex items-center pl-[4px] text-[#d0d0d0] ${cls}`}>{children}</div>;
}

function SpinBox({ value }: { value: string }) {
  return (
    <div className="w-[72px] h-[21px] shrink-0 bg-[#2b2b2b] border border-[#4a4a4a] rounded-[2px] flex items-center text-[#d0d0d0]">
      <div className="w-[18px] h-full border-r border-[#4a4a4a] flex items-center justify-center"><Spin bright /></div>
      <span className="pl-[4px]">{value}</span>
    </div>
  );
}

function Check({ disabled }: { disabled?: boolean }) {
  if (disabled) return <div className="w-[12px] h-[12px] border border-[#4c4c4c] rounded-[2px] shrink-0" />;
  return (
    <div className="w-[12px] h-[12px] bg-[#999] rounded-[2px] flex items-center justify-center shrink-0">
      <svg width="10" height="10" viewBox="0 0 10 10" fill="none" stroke="#2f2f2f" strokeWidth="1.8"><path d="M2 5l2 2.5L8 2" /></svg>
    </div>
  );
}

function Dialog() {
  const cols = ['w-[71px]', 'w-[71px]', 'w-[71px]', 'w-[71px]'];
  return (
    <div className="absolute left-[768px] top-[374px] w-[457px] h-[420px] border border-[#5b9a9a] shadow-[0_8px_22px_rgba(0,0,0,0.3)] bg-[#323232] flex flex-col text-[12px] text-[#cfcfcf] font-['Noto_Sans',sans-serif]">
      <div className="h-[37px] shrink-0 bg-white text-[14.5px] text-[#2a2a2a] pl-[9px] flex items-center">Dokument einrichten</div>
      <div className="mt-[15px] flex flex-col gap-[6px]">
        <div className="flex items-center h-[21px]">
          <div className="w-[95px] text-right whitespace-nowrap">Zielmedium:</div>
          <Box w="w-[95px]" cls="ml-[7px] justify-between pr-[4px]">Druck<Chev /></Box>
        </div>
        <div className="flex items-center h-[20px]">
          <div className="w-[95px] text-right whitespace-nowrap">Seitenanzahl:</div>
          <Box w="w-[55px]" cls="ml-[7px]">4</Box>
          <div className="ml-[37px]"><Check /></div>
          <span className="ml-[7px] text-[#bdbdbd]">Doppelseite</span>
        </div>
        <div className="flex items-center h-[20px]">
          <div className="w-[96px] text-right whitespace-nowrap">Startseitennr.:</div>
          <Box w="w-[55px]" cls="ml-[6px]">1</Box>
          <div className="ml-[37px]"><Check disabled /></div>
          <span className="ml-[7px] text-[#5a5a5a]">Primärer Textrahmen</span>
        </div>
      </div>
      <div className="mt-[20px] mx-[17px] flex flex-col">
        <div className="flex items-center h-[21px]">
          <div className="w-[89px] text-right whitespace-nowrap">Seitenformat:</div>
          <Box w="w-[199px]" cls="ml-[6px] justify-between pr-[4px]">[Benutzerdefiniert]<Chev /></Box>
          <div className="ml-[10px] flex-1 border-t border-[#3b3b3b]" />
        </div>
        <div className="h-[74px] border-x border-b border-[#393939] rounded-b-[2px] pt-[15px] flex flex-col gap-[5px]">
          <div className="flex items-center h-[21px]">
            <div className="w-[82px] text-right">Breite:</div>
            <div className="ml-[6px]"><SpinBox value="85 mm" /></div>
            <div className="ml-[54px] w-[79px] whitespace-nowrap">Ausrichtung:</div>
            <div className="w-[12px] h-[15px] bg-[#aaa] flex flex-col items-center justify-center gap-[1px]">
              <div className="w-[4px] h-[4px] bg-[#333] rounded-full" />
              <div className="w-[6px] h-[6px] bg-[#333] rounded-t-[2px]" />
            </div>
            <div className="ml-[6px] w-[20px] h-[20px] bg-[#1f1f1f] rounded-[3px] flex items-center justify-center">
              <div className="w-[13px] h-[11px] bg-[#aaa] flex items-center justify-start">
                <div className="w-[6px] h-[5px] bg-[#1f1f1f] rounded-r-[2px]" />
              </div>
            </div>
          </div>
          <div className="flex items-center h-[21px]">
            <div className="w-[82px] text-right">Höhe:</div>
            <div className="ml-[6px]"><SpinBox value="55 mm" /></div>
          </div>
        </div>
      </div>
      <div className="mt-[14px] mx-[17px] flex flex-col">
        <div className="flex items-center h-[20px] pl-[15px]">
          <Chev />
          <span className="ml-[8px] whitespace-nowrap">Anschnitt und Infobereich</span>
          <div className="ml-[10px] flex-1 border-t border-[#393939] mt-[3px]" />
        </div>
        <div className="h-[93px] border-x border-b border-[#393939] pt-[13px]">
          <div className="flex h-[16px] ml-[85px] gap-[6px]">
            {['Oben', 'Unten', 'Innen'].map(t => (
              <div key={t} className="w-[71px] text-center leading-[16px]">{t}</div>
            ))}
            <div className="w-[71px] text-center leading-[16px] pr-[11px]">Außen</div>
          </div>
          <div className="flex items-center mt-[7px] h-[21px]">
            <div className="w-[78px] text-right">Anschnitt:</div>
            <div className="ml-[7px] flex gap-[6px]">
              {cols.map((c, i) =>
                i === 1 ? (
                  <div key={i} className={`${c} h-[21px] bg-white border border-[#7fb0ff] rounded-[2px] flex items-center pl-[4px] text-[#3a4f6a]`}>
                    <span className="bg-[#4b96e6] leading-[16px]">3 mm</span>
                  </div>
                ) : (
                  <Box key={i} w={c}>3 mm</Box>
                )
              )}
            </div>
            <div className="ml-[7px] w-[18px] h-[18px] bg-[#1f1f1f] rounded-[2px] flex items-center justify-center">{chain}</div>
          </div>
          <div className="flex items-center mt-[5px] h-[21px]">
            <div className="w-[78px] text-right">Infobereich:</div>
            <div className="ml-[7px] flex gap-[6px]">
              {cols.map((c, i) => <Box key={i} w={c}>0 mm</Box>)}
            </div>
            <div className="ml-[9px]">{brokenChain}</div>
          </div>
        </div>
      </div>
      <div className="mt-[8px] flex items-start pl-[16px]">
        <div className="flex items-center mt-[4px]">
          <Check />
          <span className="ml-[7px] text-[#bdbdbd]">Vorschau</span>
        </div>
        <div className="ml-auto mt-[1px] mr-[15px] flex gap-[11px]">
          <div className="w-[89px] h-[26px] border-2 border-[#c4c4c4] rounded-full flex items-center justify-center text-[#cfcfcf]">OK</div>
          <div className="w-[90px] h-[26px] border border-[#b0b0b0] rounded-full flex items-center justify-center text-[#cfcfcf]">Abbrechen</div>
        </div>
      </div>
    </div>
  );
}

export default function App() {
  return (
    <div className="relative w-[1920px] h-[1080px] overflow-hidden bg-[#111] flex flex-col font-['Noto_Sans',sans-serif]">
      <MenuBar />
      <ControlBar />
      <div className="h-[989px] shrink-0 flex bg-[#262626]">
        <Toolbar />
        <div className="w-[1662px] ml-[2px] mr-[2px] flex flex-col shrink-0">
          <div className="h-[29px] shrink-0 bg-[#2b2b2b] flex items-end">
            <div className="w-[166px] h-[28px] bg-[#333] flex items-center pl-[14px] text-[12px] font-semibold text-[#d8d8d8] font-['Roboto',sans-serif]">
              <span className="w-[128px] whitespace-nowrap">*Unbenannt-1 @ 150 %</span>
              <X size={10} strokeWidth={3.5} />
            </div>
          </div>
          <div className="flex flex-1 min-h-0 flex-col">
            <div className="flex flex-1 min-h-0">
              <div className="w-[1646px] shrink-0 flex flex-col">
                <HRuler />
                <Canvas />
              </div>
              <div className="w-[16px] shrink-0 bg-[#333] flex flex-col justify-end items-center text-[#666]">
                <ChevronDown size={10} className="mb-[10px]" />
              </div>
            </div>
            <StatusBar />
          </div>
        </div>
        <Dock />
      </div>
      <PagesPanel />
      <Dialog />
    </div>
  );
}
